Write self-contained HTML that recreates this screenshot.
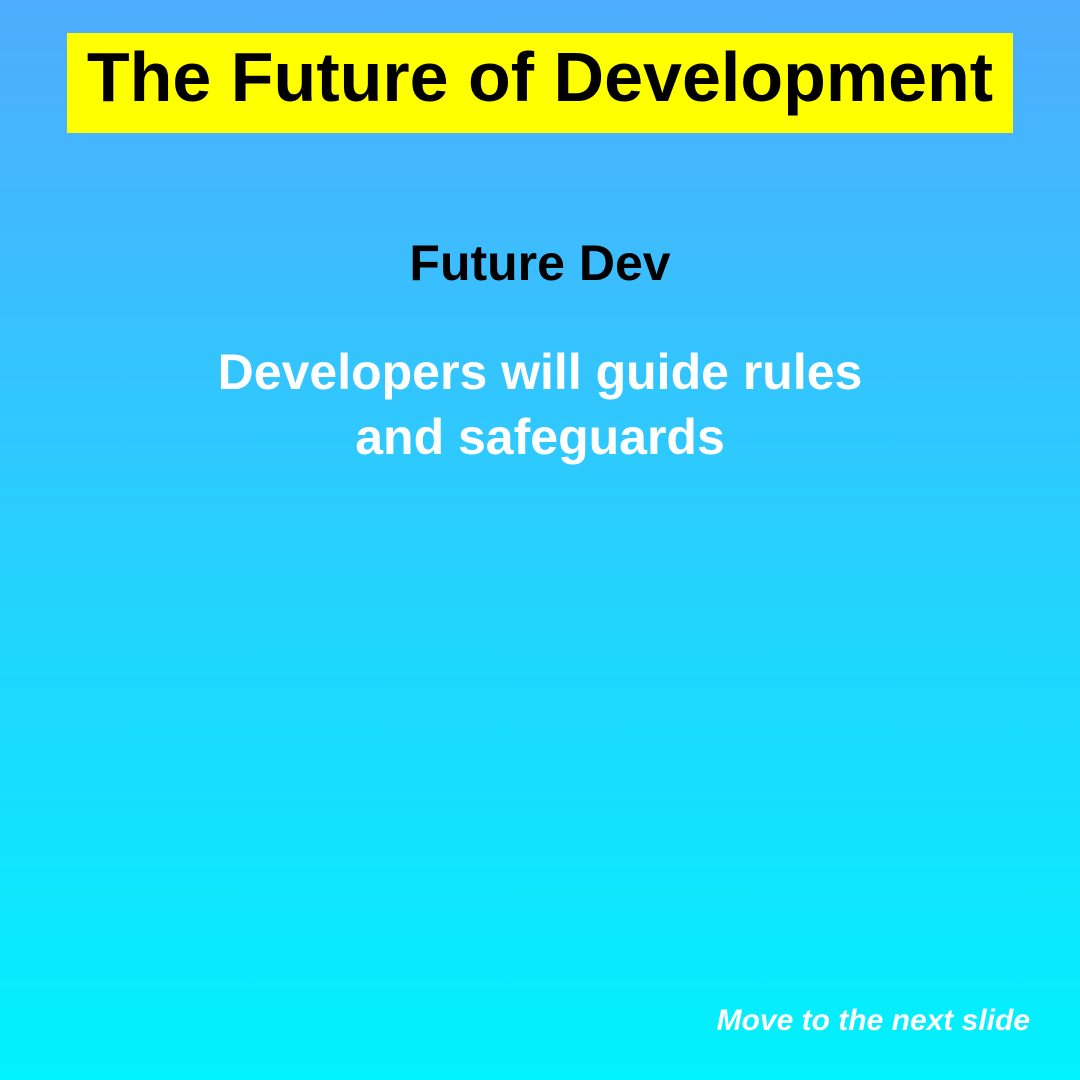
<!DOCTYPE html>
<html><head><meta charset="utf-8"><style>
html,body{margin:0;padding:0}
body{width:1080px;height:1080px;position:relative;overflow:hidden;
background:linear-gradient(to bottom,#4facfe 0%,#00f2fe 100%);
font-family:"Liberation Sans",Arial,sans-serif;}
.title{position:absolute;left:67px;top:33px;width:946px;height:100px;background:#ffff00;
font-weight:bold;font-size:70px;line-height:88px;text-align:center;color:#000;white-space:nowrap;}
.sub{position:absolute;left:0;width:1080px;top:228px;text-align:center;font-weight:bold;font-size:50px;line-height:70px;color:#000}
.body{position:absolute;left:0;width:1080px;top:340px;text-align:center;font-weight:bold;font-size:50px;line-height:65px;color:#fff}
.foot{position:absolute;right:50px;top:1001px;font-weight:bold;font-style:italic;font-size:30px;line-height:40px;color:#fff}
</style></head><body>
<div class="title">The Future of Development</div>
<div class="sub">Future Dev</div>
<div class="body">Developers will guide rules<br>and safeguards</div>
<div class="foot">Move to the next slide</div>
</body></html>
